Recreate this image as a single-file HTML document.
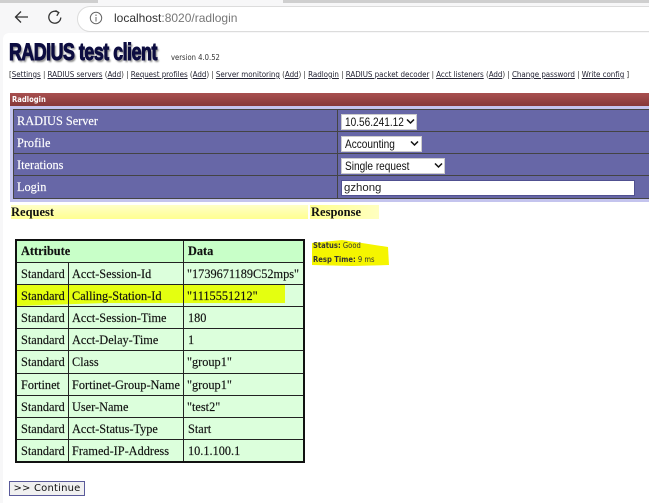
<!DOCTYPE html>
<html><head><meta charset="utf-8">
<style>
html,body{margin:0;padding:0;width:649px;height:503px;overflow:hidden;background:#f7f7f8}
.a{position:absolute;white-space:nowrap}
#page{position:absolute;left:3px;top:33px;width:646px;height:470px;background:#fff;border-top-left-radius:6px}
.s{font-family:"Liberation Serif",serif}
.v{font-family:"DejaVu Sans",sans-serif;transform:scaleX(.91);transform-origin:left top}
.l{font-family:"Liberation Sans",sans-serif}
.nav{font-family:"DejaVu Sans",sans-serif;color:#333;transform:scaleX(.917);transform-origin:left top}
.nav u{color:#223}
.lab{font:12.3px "Liberation Serif",serif;color:#fff;left:17px;-webkit-text-stroke:.15px #fff}
.sel{background:#fff;border:1px solid #ccc;font:12px "Liberation Sans",sans-serif;color:#111;height:14px;line-height:14px;box-sizing:content-box;padding-left:3px}
.sel span{display:inline-block;transform:scaleX(.84);transform-origin:left top}
.t{font:12.3px "Liberation Serif",serif;color:#111;-webkit-text-stroke:.15px #111}
</style></head><body>
<div class="a" style="left:0;top:0;width:98px;height:3px;background:#cfcfcf"></div>
<div class="a" style="left:283px;top:0;width:366px;height:3px;background:#cfcfcf"></div>
<div class="a" style="left:0;top:3px;width:649px;height:30px;background:#f7f7f8"></div>
<svg class="a" style="left:13px;top:8px" width="18" height="18" viewBox="0 0 18 18" fill="none" stroke="#333" stroke-width="1.3"><path d="M2.500 9H15M8 3.500L2.500 9L8 14.500"/></svg>
<svg class="a" style="left:46px;top:8px" width="18" height="18" viewBox="0 0 18 18" fill="none" stroke="#333" stroke-width="1.3"><path d="M14.800 9.500A6 6 0 1 1 12.500 4.500M9.500 2.500L12.800 4.600L10.800 7.800"/></svg>
<div class="a" style="left:77px;top:6px;width:600px;height:24px;border:1px solid #dcdcdc;border-radius:13px;background:#fff"></div>
<svg class="a" style="left:89px;top:11px" width="14" height="14" viewBox="0 0 14 14" fill="none" stroke="#666"><circle cx="7" cy="7" r="5.700"/><path d="M7 6V10.500M7 3.500V5"/></svg>
<div class="a l" style="left:114px;top:11px;font-size:12px;color:#333">localhost<span style="color:#777">:8020/radlogin</span></div>
<div id="page"></div>
<div class="a l" style="left:9px;top:39px;font-size:24px;font-weight:bold;color:#0c0c40;letter-spacing:-.6px;text-shadow:2px 2px 2px #888;-webkit-text-stroke:1px #0c0c40;transform:scaleX(.74);transform-origin:left top">RADIUS test client</div>
<div class="a v" style="left:171px;top:53px;font-size:7.500px;color:#333">version 4.0.52</div>
<div class="a nav" style="left:9px;top:70px;font-size:7.800px;letter-spacing:-.05px">[<u>Settings</u> | <u>RADIUS servers</u> (<u>Add</u>) | <u>Request profiles</u> (<u>Add</u>) | <u>Server monitoring</u> (<u>Add</u>) | <u>Radlogin</u> | <u>RADIUS packet decoder</u> | <u>Acct listeners</u> (<u>Add</u>) | <u>Change password</u> | <u>Write config</u> ]</div>
<div class="a" style="left:10px;top:93px;width:639px;height:13px;background:linear-gradient(#a85050,#863838)"></div>
<div class="a v" style="left:12px;top:95px;font-size:7.500px;font-weight:bold;color:#fff">Radlogin</div>
<div class="a" style="left:10px;top:106px;width:639px;height:96px;background:#c4c4ee"></div>
<div class="a" style="left:13px;top:109px;width:636px;height:90px;background:#6767a7;border:1px solid #444;border-right:0;box-sizing:border-box"></div>
<div class="a" style="left:13px;top:131px;width:636px;height:1px;background:#444"></div>
<div class="a" style="left:13px;top:153px;width:636px;height:1px;background:#444"></div>
<div class="a" style="left:13px;top:175px;width:636px;height:1px;background:#444"></div>
<div class="a" style="left:337px;top:109px;width:1px;height:90px;background:#444"></div>
<div class="a lab" style="top:114px">RADIUS Server</div>
<div class="a lab" style="top:136px">Profile</div>
<div class="a lab" style="top:158px">Iterations</div>
<div class="a lab" style="top:180px">Login</div>
<div class="a sel" style="left:341px;top:114px;width:71px"><span>10.56.241.12</span></div>
<div class="a sel" style="left:341px;top:136px;width:76px"><span>Accounting</span></div>
<div class="a sel" style="left:341px;top:158px;width:99px"><span>Single request</span></div>
<svg class="a" style="left:406px;top:118px" width="9" height="7" fill="none" stroke="#111" stroke-width="1.500"><path d="M1 1.500L4.500 5L8 1.500"/></svg>
<svg class="a" style="left:410px;top:140px" width="9" height="7" fill="none" stroke="#111" stroke-width="1.500"><path d="M1 1.500L4.500 5L8 1.500"/></svg>
<svg class="a" style="left:434px;top:162px" width="9" height="7" fill="none" stroke="#111" stroke-width="1.500"><path d="M1 1.500L4.500 5L8 1.500"/></svg>
<div class="a l" style="left:341px;top:180px;height:14px;line-height:14px;background:#fff;border:1px solid #505090;font-size:11.400px;color:#222;padding-left:2px;box-sizing:content-box;width:290px">gzhong</div>
<div class="a" style="left:11px;top:205px;width:297px;height:14px;background:linear-gradient(#ffffc8,#ffff90)"></div>
<div class="a" style="left:310px;top:205px;width:69px;height:14px;background:linear-gradient(90deg,#ffff90,#ffffc0)"></div>
<div class="a s" style="left:11px;top:205px;font-size:12.500px;font-weight:bold;color:#111">Request</div>
<div class="a s" style="left:311px;top:205px;font-size:12.500px;font-weight:bold;color:#111">Response</div>
<svg class="a" style="left:312px;top:239px" width="78" height="28"><path d="M0 4L30 1L50 4L76 8L77 26L40 27L0 26Z" fill="#f5f500"/></svg>
<div class="a v" style="left:313px;top:241px;font-size:7.500px;color:#333"><b>Status:</b> Good</div>
<div class="a v" style="left:313px;top:255px;font-size:7.500px;color:#333"><b>Resp Time:</b> 9 ms</div>
<svg class="a" style="left:15px;top:239px" width="290" height="225">
<rect x="1" y="1" width="288" height="222" fill="#dcffdc"/>
<rect x="1" y="1" width="288" height="22" fill="#c8ffc8"/>
<path d="M1 46H270V64L90 64L1 67Z" fill="#e4ff10"/>
<g stroke="#222" fill="none">
<path d="M0 23.500H289M0 45.500H289M0 67.500H289M0 89.500H289M0 111.500H289M0 134.500H289M0 156.500H289M0 178.500H289M0 200.500H289M53.500 23V222M168.500 0V222"/>
<rect x="1" y="1" width="288" height="222" stroke-width="2" stroke="#111"/>
</g></svg>
<div class="a t" style="left:21px;top:244px;font-weight:bold;font-size:12.300px">Attribute</div>
<div class="a t" style="left:188px;top:244px;font-weight:bold;font-size:12.300px">Data</div>
<div class="a t" style="left:21px;top:267px">Standard</div><div class="a t" style="left:72px;top:267px">Acct-Session-Id</div><div class="a t" style="left:187px;top:267px">"1739671189C52mps"</div>
<div class="a t" style="left:21px;top:289px">Standard</div><div class="a t" style="left:72px;top:289px">Calling-Station-Id</div><div class="a t" style="left:187px;top:289px">"1115551212"</div>
<div class="a t" style="left:21px;top:311px">Standard</div><div class="a t" style="left:72px;top:311px">Acct-Session-Time</div><div class="a t" style="left:188px;top:311px">180</div>
<div class="a t" style="left:21px;top:333px">Standard</div><div class="a t" style="left:72px;top:333px">Acct-Delay-Time</div><div class="a t" style="left:188px;top:333px">1</div>
<div class="a t" style="left:21px;top:355px">Standard</div><div class="a t" style="left:72px;top:355px">Class</div><div class="a t" style="left:187px;top:355px">"group1"</div>
<div class="a t" style="left:21px;top:378px">Fortinet</div><div class="a t" style="left:72px;top:378px">Fortinet-Group-Name</div><div class="a t" style="left:187px;top:378px">"group1"</div>
<div class="a t" style="left:21px;top:400px">Standard</div><div class="a t" style="left:72px;top:400px">User-Name</div><div class="a t" style="left:187px;top:400px">"test2"</div>
<div class="a t" style="left:21px;top:422px">Standard</div><div class="a t" style="left:72px;top:422px">Acct-Status-Type</div><div class="a t" style="left:188px;top:422px">Start</div>
<div class="a t" style="left:21px;top:444px">Standard</div><div class="a t" style="left:72px;top:444px">Framed-IP-Address</div><div class="a t" style="left:188px;top:444px">10.1.100.1</div>
<div class="a" style="left:9px;top:481px;width:76px;height:15px;box-sizing:border-box;border:1px solid #5a5a9a;background:#f0f0f0;font:10px/14px 'DejaVu Sans',sans-serif;text-align:center;color:#111;letter-spacing:.2px">&gt;&gt; Continue</div>
</body></html>
